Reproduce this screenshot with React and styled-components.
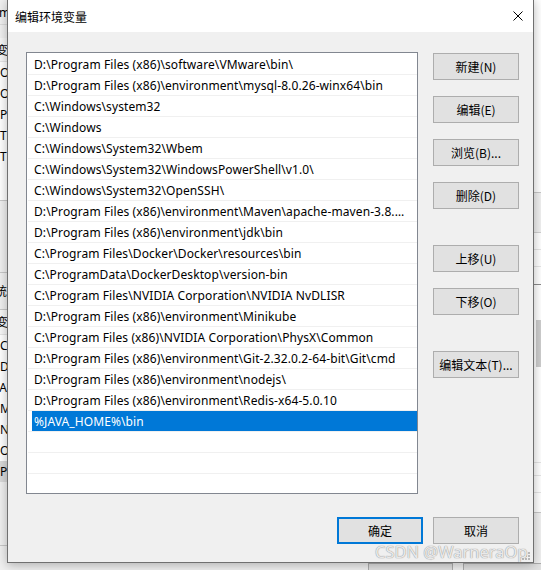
import React from 'react'
import styled, { createGlobalStyle } from 'styled-components'

const GlobalStyle = createGlobalStyle`
  html, body {
    margin: 0;
    padding: 0;
  }
  body {
    background: #f0f0f0;
    font-family: "Noto Sans", "Noto Sans CJK SC", sans-serif;
  }
`

const Desktop = styled.div`
  position: relative;
  width: 541px;
  height: 570px;
  overflow: hidden;
  background: #f0f0f0;
`

// window behind the dialog (only thin strips show)
const BackWindow = styled.div`
  display: flex;
  flex-direction: column;
  height: 100%;
`

const BackMain = styled.div`
  flex: 1;
  min-height: 0;
  display: flex;
  justify-content: space-between;
`

const BackPane = styled.div`
  width: ${p => p.$w}px;
  display: flex;
  flex-direction: column;
  overflow: hidden;
`

const BackCell = styled.div`
  flex: none;
  height: ${p => p.$h}px;
  box-sizing: border-box;
  background: ${p => p.$bg || '#fff'};
  border-bottom: ${p => (p.$line ? `1px solid ${p.$line}` : 'none')};
  display: flex;
  align-items: center;
  white-space: nowrap;
  overflow: hidden;
  text-indent: ${p => p.$shift || 0}px;
  font: 12px "Noto Sans", "Noto Sans CJK SC", sans-serif;
  color: #000;
`

const Thumb = styled.div`
  margin-left: 3px;
  width: 5px;
  height: 47px;
  background: #cdcdcd;
`

const BackFooter = styled.div`
  flex: none;
  height: 7px;
  display: flex;
  gap: 10px;
  padding: 2px 0 0 368px;
  overflow: hidden;
`

const BackButton = styled.div`
  flex: none;
  width: 85px;
  height: 27px;
  box-sizing: border-box;
  border: 1px solid #adadad;
  background: #e1e1e1;
`

// the dialog
const Dialog = styled.div`
  position: absolute;
  left: 7px;
  top: -1px;
  width: 527px;
  height: 564px;
  box-sizing: border-box;
  border: 1px solid #707070;
  background: #f0f0f0;
  box-shadow: 0 2px 10px rgba(0, 0, 0, 0.28);
  display: flex;
  flex-direction: column;
`

const TitleBar = styled.div`
  flex: none;
  height: 32px;
  background: #fff;
  display: flex;
  align-items: center;
  justify-content: space-between;
  padding: 0 10px 0 7px;
`

const Title = styled.span`
  font: 12px "Noto Sans CJK SC", sans-serif;
  color: #000;
`

const Body = styled.div`
  flex: 1;
  display: flex;
  flex-direction: column;
  padding: 20px 14px 0 18px;
`

const Main = styled.div`
  display: flex;
  gap: 15px;
`

const ListBox = styled.div`
  width: 392px;
  height: 442px;
  box-sizing: border-box;
  border: 1px solid #828790;
  background: #fff;
  padding: 1px 0 0 1px;
  overflow: hidden;
`

const Row = styled.div`
  height: 21px;
  box-sizing: border-box;
  border-bottom: 1px solid #f0f0f0;
  padding-left: 4px;
  display: flex;
`

const Cell = styled.div`
  flex: 1;
  min-width: 0;
  padding: 1px 8px 0 2px;
  height: 20px;
  box-sizing: border-box;
  white-space: nowrap;
  overflow: hidden;
  text-overflow: ellipsis;
  font: 12px/19px "Noto Sans", sans-serif;
  letter-spacing: 0.1px;
  color: ${p => (p.$selected ? '#fff' : '#000')};
  background: ${p => (p.$selected ? '#0078d7' : 'transparent')};
`

const SideColumn = styled.div`
  display: flex;
  flex-direction: column;
  gap: 36px;
  padding-top: 1px;
`

const ButtonGroup = styled.div`
  display: flex;
  flex-direction: column;
  gap: 16px;
`

const Button = styled.button`
  width: 86px;
  height: 27px;
  box-sizing: border-box;
  padding: 0;
  border: ${p => (p.$primary ? '2px solid #0078d7' : '1px solid #adadad')};
  background: #e1e1e1;
  font: 12px "Noto Sans CJK SC", sans-serif;
  color: #000;
`

const Footer = styled.div`
  margin-top: 23px;
  display: flex;
  justify-content: flex-end;
  gap: 10px;
`

const Grip = styled.svg`
  position: absolute;
  right: 3px;
  bottom: 2px;
`

const Watermark = styled.div`
  position: absolute;
  left: 375px;
  top: 540px;
  font: 16.5px "Noto Sans", sans-serif;
  color: rgba(244, 244, 244, 0.9);
  text-shadow: 0 0 1px #9a9a9a, 0 0 1px #9a9a9a;
  white-space: nowrap;
`

const paths = [
  'D:\\Program Files (x86)\\software\\VMware\\bin\\',
  'D:\\Program Files (x86)\\environment\\mysql-8.0.26-winx64\\bin',
  'C:\\Windows\\system32',
  'C:\\Windows',
  'C:\\Windows\\System32\\Wbem',
  'C:\\Windows\\System32\\WindowsPowerShell\\v1.0\\',
  'C:\\Windows\\System32\\OpenSSH\\',
  'D:\\Program Files (x86)\\environment\\Maven\\apache-maven-3.8.4\\bin',
  'D:\\Program Files (x86)\\environment\\jdk\\bin',
  'C:\\Program Files\\Docker\\Docker\\resources\\bin',
  'C:\\ProgramData\\DockerDesktop\\version-bin',
  'C:\\Program Files\\NVIDIA Corporation\\NVIDIA NvDLISR',
  'D:\\Program Files (x86)\\environment\\Minikube',
  'C:\\Program Files (x86)\\NVIDIA Corporation\\PhysX\\Common',
  'D:\\Program Files (x86)\\environment\\Git-2.32.0.2-64-bit\\Git\\cmd',
  'D:\\Program Files (x86)\\environment\\nodejs\\',
  'D:\\Program Files (x86)\\environment\\Redis-x64-5.0.10',
  '%JAVA_HOME%\\bin',
  '',
  '',
  '',
]

const SELECTED = 17

const leftStrip = [
  { h: 25, bg: '#f0f0f0', text: 'm', shift: -1, line: '#dcdcdc' },
  { h: 13, bg: '#f0f0f0' },
  { h: 24, bg: '#f7f7f7', text: '变', shift: -4, line: '#e5e5e5' },
  { h: 21, text: 'On' },
  { h: 21, text: 'On' },
  { h: 21, text: 'Pa' },
  { h: 21, text: 'TE' },
  { h: 21, text: 'TM' },
  { h: 34, line: '#c8c8c8' },
  { h: 72, bg: '#f0f0f0', line: '#c8c8c8' },
  { h: 37, bg: '#f0f0f0', text: '统', shift: -5, line: '#c8c8c8' },
  { h: 25, bg: '#f7f7f7', text: '变', shift: -4, line: '#e5e5e5' },
  { h: 21, text: 'Co' },
  { h: 21, text: 'Dr' },
  { h: 21, text: 'JA', shift: -4 },
  { h: 21, text: 'MA' },
  { h: 21, text: 'NU' },
  { h: 21, text: 'OS' },
  { h: 21, bg: '#d9d9d9', text: 'Pa' },
  { h: 64, bg: '#f0f0f0', line: '#c8c8c8' },
]

const rightStrip = [
  { h: 193, line: '#c8c8c8' },
  { h: 40, bg: '#f0f0f0', line: '#d0d0d0' },
  { h: 17, line: '#e5e5e5' },
  { h: 17, line: '#e5e5e5' },
  { h: 18, line: '#8a8a8a' },
  { h: 18 },
]

const rightStripLower = [
  { h: 80, line: '#e5e5e5' },
  { h: 13, line: '#e5e5e5' },
  { h: 17, line: '#e5e5e5' },
  { h: 20, line: '#c8c8c8' },
]

function CloseIcon() {
  return (
    <svg width="10" height="10" viewBox="0 0 10 10">
      <path d="M0.5 0.5 L9.5 9.5 M9.5 0.5 L0.5 9.5" stroke="#000" strokeWidth="1" fill="none" />
    </svg>
  )
}

function GripIcon() {
  const dots = [
    [6, 0], [6, 3], [3, 3], [6, 6], [3, 6], [0, 6],
  ]
  return (
    <Grip width="8" height="8" viewBox="0 0 8 8">
      {dots.map(([x, y]) => (
        <rect key={`${x}-${y}`} x={x} y={y} width="2" height="2" fill="#b8b8b8" />
      ))}
    </Grip>
  )
}

export default function App() {
  return (
    <Desktop>
      <GlobalStyle />
      <BackWindow>
        <BackMain>
          <BackPane $w={7}>
            {leftStrip.map((c, i) => (
              <BackCell key={i} $h={c.h} $bg={c.bg} $line={c.line} $shift={c.shift}>
                {c.text}
              </BackCell>
            ))}
          </BackPane>
          <BackPane $w={8}>
            {rightStrip.map((c, i) => (
              <BackCell key={i} $h={c.h} $bg={c.bg} $line={c.line} />
            ))}
            <BackCell $h={80}>
              <Thumb />
            </BackCell>
            {rightStripLower.map((c, i) => (
              <BackCell key={i} $h={c.h} $bg={c.bg} $line={c.line} />
            ))}
            <BackCell $h={80} $bg="#f0f0f0" />
          </BackPane>
        </BackMain>
        <BackFooter>
          <BackButton />
          <BackButton />
        </BackFooter>
      </BackWindow>

      <Dialog>
        <TitleBar>
          <Title>编辑环境变量</Title>
          <CloseIcon />
        </TitleBar>
        <Body>
          <Main>
            <ListBox>
              {paths.map((p, i) => (
                <Row key={i}>
                  <Cell $selected={i === SELECTED}>{p}</Cell>
                </Row>
              ))}
            </ListBox>
            <SideColumn>
              <ButtonGroup>
                <Button>新建(N)</Button>
                <Button>编辑(E)</Button>
                <Button>浏览(B)...</Button>
                <Button>删除(D)</Button>
              </ButtonGroup>
              <ButtonGroup>
                <Button>上移(U)</Button>
                <Button>下移(O)</Button>
              </ButtonGroup>
              <ButtonGroup>
                <Button>编辑文本(T)...</Button>
              </ButtonGroup>
            </SideColumn>
          </Main>
          <Footer>
            <Button $primary>确定</Button>
            <Button>取消</Button>
          </Footer>
        </Body>
        <GripIcon />
      </Dialog>

      <Watermark>CSDN @WarneraOp</Watermark>
    </Desktop>
  )
}
